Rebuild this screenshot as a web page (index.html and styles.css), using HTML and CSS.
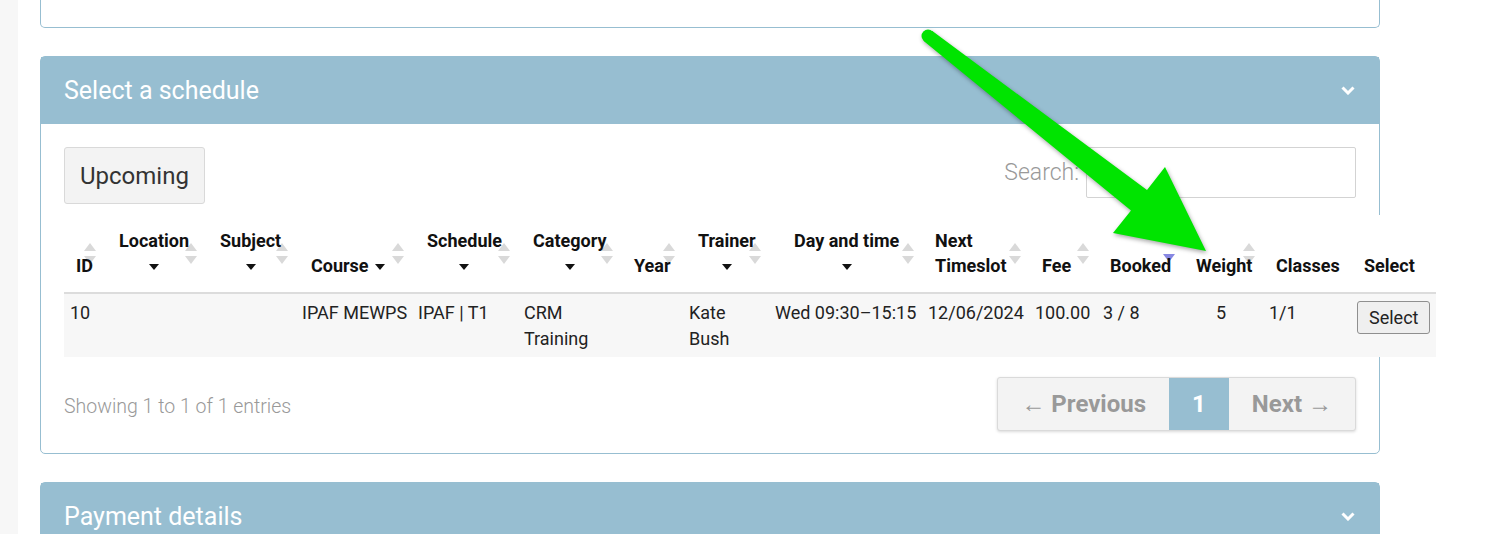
FILE: index.html
```html
<html>
<head>
  <link rel="stylesheet" href="styles.css">
</head>
<body>
  <div class="page">
    <div class="side"></div>
    <div class="main">
      <div class="panel panel-top"></div>

      <div class="panel">
        <div class="panel-head">
          <h2>Select a schedule</h2>
          <svg class="chev" width="14" height="9" viewBox="0 0 14 9"><polyline points="1.5,1.5 7,7 12.5,1.5" fill="none" stroke="#fff" stroke-width="3"/></svg>
        </div>
        <div class="panel-body">
          <div class="toolbar">
            <button class="btn-upcoming">Upcoming</button>
            <label class="search">Search: <input type="text"></label>
          </div>

          <table class="schedule">
            <colgroup>
              <col class="c-id"><col class="c-loc"><col class="c-sub"><col class="c-course">
              <col class="c-sched"><col class="c-cat"><col class="c-year"><col class="c-trainer">
              <col class="c-day"><col class="c-next"><col class="c-fee"><col class="c-booked">
              <col class="c-weight"><col class="c-classes"><col class="c-select">
            </colgroup>
            <thead>
              <tr>
                <th class="sort th-id">ID</th>
                <th class="sort filter"><span class="stack">Location<span class="caret-line"><i class="caret"></i></span></span></th>
                <th class="sort filter"><span class="stack">Subject<span class="caret-line"><i class="caret"></i></span></span></th>
                <th class="sort filter">Course <i class="caret inline"></i></th>
                <th class="sort filter"><span class="stack">Schedule<span class="caret-line"><i class="caret"></i></span></span></th>
                <th class="sort filter"><span class="stack">Category<span class="caret-line"><i class="caret"></i></span></span></th>
                <th class="sort">Year</th>
                <th class="sort filter"><span class="stack">Trainer<span class="caret-line"><i class="caret"></i></span></span></th>
                <th class="sort th-day"><span class="stack">Day and time<span class="caret-line"><i class="caret"></i></span></span></th>
                <th class="sort">Next<br>Timeslot</th>
                <th class="sort">Fee</th>
                <th class="sort desc">Booked</th>
                <th class="sort">Weight</th>
                <th>Classes</th>
                <th>Select</th>
              </tr>
            </thead>
            <tbody>
              <tr>
                <td class="td-id">10</td>
                <td></td>
                <td></td>
                <td>IPAF MEWPS</td>
                <td>IPAF | T1</td>
                <td>CRM<br>Training</td>
                <td></td>
                <td>Kate<br>Bush</td>
                <td>Wed 09:30&ndash;15:15</td>
                <td>12/06/2024</td>
                <td>100.00</td>
                <td>3 / 8</td>
                <td class="center">5</td>
                <td>1/1</td>
                <td><button class="btn-select">Select</button></td>
              </tr>
            </tbody>
          </table>

          <div class="table-foot">
            <div class="info">Showing 1 to 1 of 1 entries</div>
            <div class="pager">
              <span class="pg">&larr; Previous</span>
              <span class="pg active">1</span>
              <span class="pg">Next &rarr;</span>
            </div>
          </div>
        </div>
      </div>

      <div class="panel">
        <div class="panel-head">
          <h2>Payment details</h2>
          <svg class="chev" width="14" height="9" viewBox="0 0 14 9"><polyline points="1.5,1.5 7,7 12.5,1.5" fill="none" stroke="#fff" stroke-width="3"/></svg>
        </div>
      </div>
    </div>
  </div>

  <!-- annotation arrow drawn over the page -->
  <svg class="arrow" width="1506" height="534" viewBox="0 0 1506 534">
    <circle cx="928" cy="36" r="6.5" fill="#00e400"/>
    <polygon points="932,30.8 1147,190 1165,167 1206,251 1113,233 1131,210.5 924,41.2" fill="#00e400"/>
  </svg>
</body>
</html>
```

FILE: styles.css
```css
html, body {
  margin: 0;
  overflow: hidden;
  background: #fff;
  font-family: Roboto, "Liberation Sans", sans-serif;
  color: #222;
}

.page {
  display: flex;
  min-height: 534px;
}

.side {
  width: 18px;
  background: #f7f7f7;
}

.main {
  width: 1340px;
  margin-left: 22px;
}

.panel {
  border: 1px solid #97bed1;
  border-radius: 5px;
  background: #fff;
  margin-bottom: 28px;
}

.panel-top {
  border-top: none;
  border-radius: 0 0 5px 5px;
  height: 27px;
}

.panel-head {
  height: 67px;
  background: #97bed1;
  display: flex;
  align-items: center;
  justify-content: space-between;
  padding: 0 24px 0 23px;
}

.panel-head h2 {
  margin: 0;
  font-size: 25px;
  font-weight: 400;
  color: #fff;
}

.chev {
  display: block;
}

.panel-body {
  padding: 23px 23px 22px;
}

.toolbar {
  display: flex;
  justify-content: space-between;
  align-items: flex-start;
}

.btn-upcoming {
  font-family: Roboto, sans-serif;
  font-size: 24px;
  color: #333;
  background: #f3f3f3;
  border: 1px solid #d9d9d9;
  border-radius: 3px;
  height: 57px;
  padding: 0 15px;
}

.search {
  display: flex;
  align-items: center;
  font-size: 23px;
  font-weight: 300;
  color: #999;
}

.search input {
  margin-left: 7px;
  width: 270px;
  height: 51px;
  box-sizing: border-box;
  border: 1px solid #d3d3d3;
  border-radius: 2px;
}

.schedule {
  margin-top: 11px;
  width: 1372px;
  table-layout: fixed;
  border-collapse: collapse;
  background: #fff;
  font-size: 18px;
}

.c-id { width: 38px; }
.c-loc { width: 101px; }
.c-sub { width: 91px; }
.c-course { width: 116px; }
.c-sched { width: 106px; }
.c-cat { width: 103px; }
.c-year { width: 62px; }
.c-trainer { width: 86px; }
.c-day { width: 153px; }
.c-next { width: 107px; }
.c-fee { width: 68px; }
.c-booked { width: 86px; }
.c-weight { width: 80px; }
.c-classes { width: 88px; }
.c-select { width: 87px; }

.schedule th {
  position: relative;
  z-index: 0;
  padding: 13px 0 14px 15px;
  line-height: 25px;
  font-weight: 700;
  color: #111;
  text-align: left;
  vertical-align: bottom;
  white-space: nowrap;
  border-bottom: 2px solid #dcdcdc;
}

.schedule th.th-id { padding-left: 12px; }
.schedule th.filter { padding-left: 17px; }
.schedule th.th-day { padding-left: 27px; }

/* sort arrows, painted under the label text */
.schedule th.sort::before,
.schedule th.sort::after {
  content: "";
  position: absolute;
  z-index: -1;
  right: 6px;
  border-left: 6px solid transparent;
  border-right: 6px solid transparent;
}

.schedule th.sort::before {
  top: 28px;
  border-bottom: 8px solid #d9d9d9;
}

.schedule th.sort::after {
  top: 41px;
  border-top: 8px solid #d9d9d9;
}

.schedule th.desc::before {
  display: none;
}

.schedule th.desc::after {
  top: 39px;
  border-top-color: #8787e2;
}

.stack {
  display: inline-flex;
  flex-direction: column;
  align-items: center;
}

.caret-line {
  height: 25px;
  display: flex;
  align-items: center;
}

.caret {
  display: block;
  width: 0;
  height: 0;
  border-left: 5px solid transparent;
  border-right: 5px solid transparent;
  border-top: 6px solid #111;
  margin-top: 2px;
}

.caret.inline {
  display: inline-block;
  vertical-align: middle;
  margin: 0 0 0 2px;
}

.schedule td {
  padding: 6px 8px 5px;
  line-height: 26px;
  vertical-align: top;
  white-space: nowrap;
  background: #f7f7f7;
}

.schedule td.td-id { padding-left: 6px; }
.schedule td.center { text-align: center; }

.btn-select {
  font-family: Roboto, sans-serif;
  font-size: 18px;
  color: #222;
  height: 33px;
  margin-top: 1px;
  padding: 0 11px;
  background: #efefef;
  border: 1px solid #8f8f8f;
  border-radius: 3px;
}

.table-foot {
  margin-top: 20px;
  display: flex;
  justify-content: space-between;
  align-items: center;
}

.info {
  font-size: 19.5px;
  font-weight: 300;
  color: #999;
  padding-top: 5px;
}

.pager {
  display: flex;
  background: #f3f3f3;
  border: 1px solid #dadada;
  border-radius: 3px;
  box-shadow: 0 1px 3px rgba(0, 0, 0, 0.15);
  overflow: hidden;
}

.pg {
  height: 52px;
  line-height: 52px;
  padding: 0 23px;
  font-size: 24px;
  font-weight: 700;
  color: #999;
}

.pg.active {
  background: #97bed1;
  color: #fff;
}

.arrow {
  position: absolute;
  left: 0;
  top: 0;
  pointer-events: none;
  filter: drop-shadow(1px 2px 2px rgba(0, 0, 0, 0.35));
}
```
